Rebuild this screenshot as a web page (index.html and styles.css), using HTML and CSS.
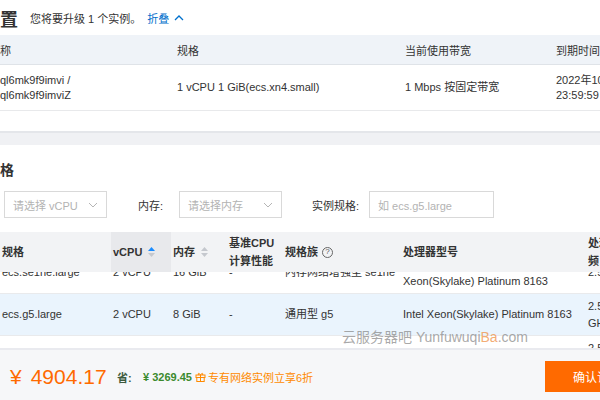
FILE: index.html
```
<!DOCTYPE html>
<html lang="zh-CN">
  <head>
    <meta charset="UTF-8" />
    <meta name="viewport" content="width=device-width, initial-scale=1.0" />
    <title>升级配置</title>
    <link rel="stylesheet" href="styles.css">
  </head>
  <body>
    <div class="card current">
      <div class="current-head">
        <h2>置</h2>
        <span class="note">您将要升级 1 个实例。</span>
        <a class="fold">折叠
          <svg width="10" height="8" viewBox="0 0 10 8"><polyline points="1,6 5,2 9,6" fill="none" stroke="#0070cc" stroke-width="1.3"/></svg>
        </a>
      </div>
      <div class="cur-grid cur-header">
        <div>称</div>
        <div>规格</div>
        <div>当前使用带宽</div>
        <div>到期时间</div>
      </div>
      <div class="cur-grid cur-row">
        <div>ql6mk9f9imvi /<br>ql6mk9f9imviZ</div>
        <div>1 vCPU 1 GiB(ecs.xn4.small)</div>
        <div>1 Mbps 按固定带宽</div>
        <div>2022年10月10日<br>23:59:59</div>
      </div>
    </div>

    <div class="card spec">
      <h3>格</h3>
      <div class="filters">
        <div class="select first">请选择 vCPU
          <svg width="10" height="6" viewBox="0 0 10 6"><polyline points="1,1 5,5 9,1" fill="none" stroke="#b5b5b5" stroke-width="1"/></svg>
        </div>
        <label>内存:</label>
        <div class="select">请选择内存
          <svg width="10" height="6" viewBox="0 0 10 6"><polyline points="1,1 5,5 9,1" fill="none" stroke="#b5b5b5" stroke-width="1"/></svg>
        </div>
        <label class="wide">实例规格:</label>
        <div class="input">如 ecs.g5.large</div>
      </div>

      <div class="spec-grid spec-header">
        <div>规格</div>
        <div class="sorted">vCPU
          <svg class="sort" width="7" height="10" viewBox="0 0 7 10"><polygon points="3.5,0 7,4 0,4" fill="#1a8cff"/><polygon points="0,6 7,6 3.5,10" fill="#c5c8ce"/></svg>
        </div>
        <div>内存
          <svg class="sort" width="7" height="10" viewBox="0 0 7 10"><polygon points="3.5,0 7,4 0,4" fill="#c5c8ce"/><polygon points="0,6 7,6 3.5,10" fill="#c5c8ce"/></svg>
        </div>
        <div>基准CPU<br>计算性能</div>
        <div>规格族 <span class="help">?</span></div>
        <div>处理器型号</div>
        <div>处理器主<br>频</div>
      </div>

      <div class="spec-body">
        <div class="spec-rows">
          <div class="spec-grid spec-row">
            <div>ecs.se1ne.large</div>
            <div>2 vCPU</div>
            <div>16 GiB</div>
            <div>-</div>
            <div>内存网络增强型 se1ne</div>
            <div>Intel<br>Xeon(Skylake) Platinum 8163</div>
            <div>2.5 GHz</div>
          </div>
          <div class="spec-grid spec-row hover">
            <div>ecs.g5.large</div>
            <div>2 vCPU</div>
            <div>8 GiB</div>
            <div>-</div>
            <div>通用型 g5</div>
            <div>Intel Xeon(Skylake) Platinum 8163</div>
            <div>2.5<br>GHz</div>
          </div>
          <div class="spec-grid spec-row">
            <div>ecs.g6.large</div>
            <div>2 vCPU</div>
            <div>8 GiB</div>
            <div>-</div>
            <div>通用型 g6</div>
            <div>Intel Xeon Platinum 8269CY</div>
            <div>2.5<br>GHz</div>
          </div>
        </div>
      </div>
    </div>

    <div class="footer">
      <span class="price"><span class="yen">¥</span>4904.17</span>
      <span class="save-label">省:</span>
      <span class="save">¥ 3269.45</span>
      <svg class="gift" width="11" height="10" viewBox="0 0 11 10"><rect x="1" y="3" width="9" height="2.5" fill="none" stroke="#ff8a00"/><rect x="1.8" y="5.5" width="7.4" height="4" fill="none" stroke="#ff8a00"/><line x1="5.5" y1="3" x2="5.5" y2="9.5" stroke="#ff8a00"/><path d="M5.5 3 C4 0.5 2.5 1.2 3.5 3 M5.5 3 C7 0.5 8.5 1.2 7.5 3" fill="none" stroke="#ff8a00"/></svg>
      <span class="promo">专有网络实例立享6折</span>
      <button class="confirm">确认订单</button>
    </div>

    <div class="watermark">云服务器吧 Yunfuwuqi<span>Ba</span>.com</div>
  </body>
</html>
```

FILE: styles.css
```
html,
body {
  margin: 0;
  padding: 0;
}

body {
  width: 600px;
  height: 400px;
  overflow: hidden;
  display: flex;
  flex-direction: column;
  background-color: #f0f1f4;
  font-family: "Liberation Sans", "Noto Sans CJK SC", sans-serif;
  font-size: 11px;
  color: #333;
  position: relative;
}

.card {
  background-color: #fff;
}

/* current config */
.current {
  padding-bottom: 20px;
  border-bottom: 2px solid #e4e6ea;
  margin-bottom: 12px;
}

.current-head {
  height: 35px;
  display: flex;
  align-items: center;
}

.current-head h2 {
  margin: 0;
  width: 30px;
  font-size: 18px;
  font-weight: bold;
}

.note {
  color: #333;
}

.fold {
  margin-left: 6px;
  color: #0070cc;
  display: flex;
  align-items: center;
  gap: 5px;
}

.cur-grid {
  display: grid;
  grid-template-columns: 177px 228px 151px 200px;
  width: 756px;
  align-items: center;
}

.cur-header {
  height: 29px;
  background-color: #eff3f8;
  border-bottom: 1px solid #dfe3e8;
}

.cur-row {
  height: 45px;
  line-height: 15px;
  border-bottom: 1px solid #e8e9eb;
}

/* spec selection */
.spec {
  flex: 1;
  display: flex;
  flex-direction: column;
  min-height: 0;
}

.spec h3 {
  margin: 0;
  padding-top: 15px;
  line-height: 20px;
  font-size: 14px;
  font-weight: bold;
}

.filters {
  display: flex;
  align-items: center;
  margin-top: 11px;
  height: 27px;
}

.select,
.input {
  box-sizing: border-box;
  height: 27px;
  border: 1px solid #d9d9d9;
  padding: 0 8px;
  display: flex;
  align-items: center;
  justify-content: space-between;
  color: #b3b3b3;
  width: 103px;
}

.select.first {
  margin-left: 4px;
}

.input {
  width: 125px;
}

.filters label {
  margin-left: 31px;
  width: 41px;
}

.filters label.wide {
  margin-left: 30px;
  width: 57px;
}

.spec-grid {
  display: grid;
  grid-template-columns: 111px 60px 56px 56px 118px 185px 80px;
  width: 666px;
  align-items: center;
}

.spec-grid > div {
  padding-left: 2px;
  height: 100%;
  display: flex;
  align-items: center;
}

.spec-header {
  margin-top: 14px;
  height: 40px;
  background-color: #f2f3f5;
  line-height: 18px;
  font-weight: bold;
  color: #333;
}

.spec-header .sorted {
  background-color: #e8e9ec;
}

.sort {
  margin-left: 6px;
}

.help {
  display: inline-flex;
  align-items: center;
  justify-content: center;
  box-sizing: border-box;
  width: 11px;
  height: 11px;
  border: 1px solid #666;
  border-radius: 50%;
  font-size: 8px;
  font-weight: normal;
  color: #555;
  margin-left: 4px;
}

.spec-body {
  flex: 1;
  overflow: hidden;
}

.spec-rows {
  margin-top: -20px;
}

.spec-row {
  height: 42px;
  box-sizing: border-box;
  border-bottom: 1px solid #e9eaec;
  line-height: 17px;
  background-color: #fff;
}

.spec-row.hover {
  background-color: #eaf4fd;
}

/* footer */
.footer {
  height: 52px;
  flex-shrink: 0;
  box-sizing: border-box;
  border-top: 2px solid #e9eaef;
  background-color: #f6f7f9;
  display: flex;
  align-items: center;
  padding: 3px 0 0 10px;
}

.price {
  font-size: 21px;
  color: #ff6a00;
  width: 107px;
}

.price .yen {
  margin-right: 9px;
}

.save-label {
  font-weight: bold;
  color: #3d5a3d;
  width: 26px;
}

.save {
  color: #3b8a2e;
  font-weight: bold;
}

.gift {
  margin-left: 3px;
}

.promo {
  color: #ff8a00;
  margin-left: 2px;
}

.confirm {
  margin-left: auto;
  margin-right: -45px;
  flex-shrink: 0;
  width: 100px;
  height: 31px;
  border: none;
  background-color: #ff6a00;
  color: #fff;
  font-family: inherit;
  font-size: 12px;
  text-align: left;
  padding-left: 28px;
}

.watermark {
  position: absolute;
  left: 342px;
  top: 326px;
  font-size: 14px;
  color: rgba(140, 140, 140, 0.75);
}

.watermark span {
  color: rgba(240, 150, 80, 0.8);
}
```
